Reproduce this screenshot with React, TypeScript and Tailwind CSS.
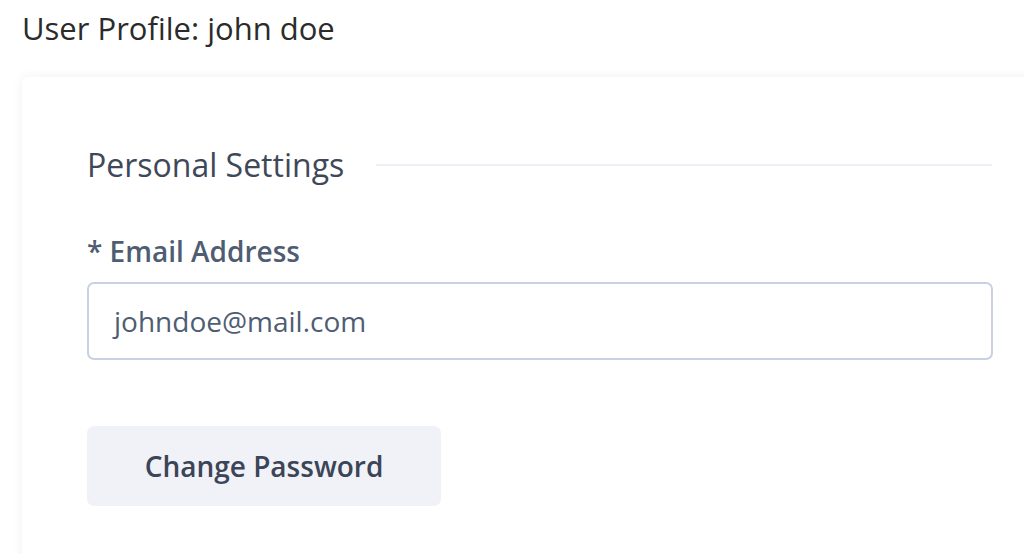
export default function App() {
  return (
    <div className="min-h-[554px] bg-white font-['Open_Sans',sans-serif] overflow-hidden">
      <div className="pl-[22px] pt-[7px]">
        <h1 className="text-[31px] leading-[42px] text-[#2b2b2b]">User Profile: john doe</h1>
        <div className="mt-[28px] -mr-[40px] bg-white rounded-[6px] shadow-[0_0_12px_rgba(0,0,0,0.06)] pl-[65px] pr-[72px] pt-[66px] pb-[60px]">
          <div className="flex items-center gap-[32px]">
            <h2 className="text-[32px] leading-[44px] text-[#3e4859] whitespace-nowrap">Personal Settings</h2>
            <div className="h-[2px] flex-1 bg-[#eef0f5]" />
          </div>
          <label className="block mt-[45px] text-[28px] leading-[38px] font-semibold text-[#4f5d73]">
            * Email Address
          </label>
          <div className="mt-[12px] w-[906px] h-[78px] border-2 border-[#c9d0e3] rounded-[7px] flex items-center px-[25px]">
            <span className="text-[28px] text-[#4f5d73]">johndoe@mail.com</span>
          </div>
          <button className="mt-[66px] w-[354px] h-[80px] rounded-[7px] bg-[#f0f2f7] text-[28px] font-semibold text-[#3b4557]">
            Change Password
          </button>
        </div>
      </div>
    </div>
  )
}
